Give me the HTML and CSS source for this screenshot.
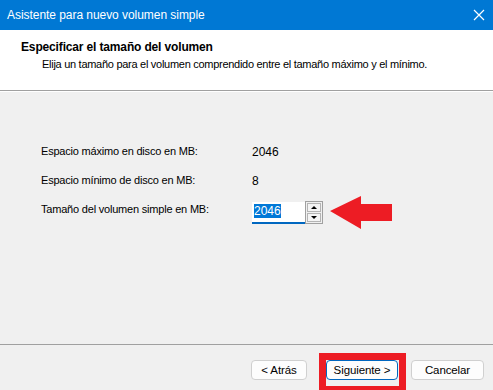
FILE: index.html
```html
<!DOCTYPE html>
<html lang="es">
<head>
    <meta charset="UTF-8">
    <meta name="viewport" content="width=device-width, initial-scale=1.0">
    <title>Asistente para nuevo volumen simple</title>
    <link rel="stylesheet" href="styles.css">
</head>
<body>
    <div class="window">
        <div class="titlebar">
            <span class="title">Asistente para nuevo volumen simple</span>
            <svg class="close" width="12" height="12" viewBox="0 0 12 12">
                <path d="M1 1 L11 11 M11 1 L1 11" stroke="#ffffff" stroke-width="1.2" fill="none"/>
            </svg>
        </div>

        <div class="header">
            <h1>Especificar el tamaño del volumen</h1>
            <p>Elija un tamaño para el volumen comprendido entre el tamaño máximo y el mínimo.</p>
        </div>

        <div class="content">
            <div class="row">
                <span class="label">Espacio máximo en disco en MB:</span>
                <span class="value">2046</span>
            </div>
            <div class="row">
                <span class="label">Espacio mínimo de disco en MB:</span>
                <span class="value">8</span>
            </div>
            <div class="row row-input">
                <span class="label">Tamaño del volumen simple en MB:</span>
                <div class="spin">
                    <div class="field"><span class="selected">2046</span></div>
                    <div class="spin-buttons">
                        <div class="spin-btn"><span class="tri-up"></span></div>
                        <div class="spin-btn"><span class="tri-down"></span></div>
                    </div>
                </div>
            </div>
        </div>

        <div class="footer">
            <button class="btn">&lt; Atrás</button>
            <button class="btn btn-default">Siguiente &gt;</button>
            <button class="btn">Cancelar</button>
        </div>

        <!-- annotations drawn over the dialog -->
        <svg class="arrow" width="66" height="38" viewBox="0 0 66 38">
            <polygon points="2,17 33,2 33,10 64,10 64,27 33,27 33,35" fill="#ed1c24"/>
        </svg>
        <div class="highlight-box"></div>
    </div>
</body>
</html>
```

FILE: styles.css
```css
body {
    margin: 0;
    padding: 0;
    font-family: "Liberation Sans", Arial, sans-serif;
    font-size: 11px;
    letter-spacing: -0.2px;
    color: #000000;
    background-color: #f0f0f0;
}
.window {
    position: relative;
    width: 493px;
    height: 390px;
    overflow: hidden;
    background-color: #f0f0f0;
}
.titlebar {
    height: 30px;
    background-color: #0078d4;
    color: white;
    display: flex;
    align-items: center;
    justify-content: space-between;
    padding: 0 8px 0 7px;
}
.title {
    font-size: 12px;
    letter-spacing: -0.05px;
}
.header {
    height: 60px;
    background-color: white;
    border-bottom: 1px solid #a0a0a0;
    box-shadow: 0 1px 0 #ffffff;
}
.header h1 {
    margin: 0;
    padding: 10px 0 0 21px;
    font-size: 12px;
    font-weight: bold;
    letter-spacing: -0.15px;
    line-height: 15px;
}
.header p {
    margin: 0;
    padding: 2px 0 0 42px;
    font-size: 11px;
    letter-spacing: -0.28px;
    line-height: 15px;
}
.content {
    height: 254px;
    padding: 46px 0 0 41px;
    box-sizing: border-box;
    border-bottom: 1px solid #a0a0a0;
}
.row {
    display: flex;
    align-items: center;
    height: 29px;
}
.label {
    width: 211px;
    line-height: 29px;
}
.value {
    font-size: 12px;
    letter-spacing: 0;
}
.row-input {
    align-items: flex-start;
}
.spin {
    display: flex;
    margin-top: 7px;
}
.field {
    width: 53px;
    height: 22px;
    background-color: white;
    border-bottom: 2px solid #0067c0;
    padding: 3px 0 0 2px;
    box-sizing: border-box;
    font-size: 12px;
    letter-spacing: 0;
    line-height: 12px;
}
.selected {
    background-color: #0078d7;
    color: white;
}
.spin-buttons {
    width: 18px;
    height: 23px;
    margin-top: -1px;
    border: 1px solid #a0a0a0;
    box-sizing: border-box;
    display: flex;
    flex-direction: column;
    padding: 1px;
    gap: 1px;
}
.spin-btn {
    flex: 1;
    border: 1px solid #b4b4b4;
    background-color: #f4f4f4;
    display: flex;
    align-items: center;
    justify-content: center;
}
.tri-up {
    width: 0;
    height: 0;
    border-left: 3px solid transparent;
    border-right: 3px solid transparent;
    border-bottom: 3px solid #000;
}
.tri-down {
    width: 0;
    height: 0;
    border-left: 3px solid transparent;
    border-right: 3px solid transparent;
    border-top: 3px solid #000;
}
.footer {
    display: flex;
    justify-content: flex-end;
    padding: 15px 9px 0 0;
}
.btn {
    height: 20px;
    font-family: "Liberation Sans", Arial, sans-serif;
    font-size: 11.5px;
    letter-spacing: -0.1px;
    background-color: #fdfdfd;
    border: 1px solid #d0d0d0;
    border-radius: 4px;
    padding: 0;
    color: #000;
    width: 56px;
}
.btn-default {
    width: 72px;
    margin-left: 19px;
    border: 1px solid #0067c0;
}
.btn:last-child {
    width: 73px;
    margin-left: 13px;
}
.arrow {
    position: absolute;
    left: 328px;
    top: 194px;
}
.highlight-box {
    position: absolute;
    left: 319px;
    top: 353px;
    width: 87px;
    height: 40px;
    border: 7px solid #ed1c24;
    box-sizing: border-box;
}
```
